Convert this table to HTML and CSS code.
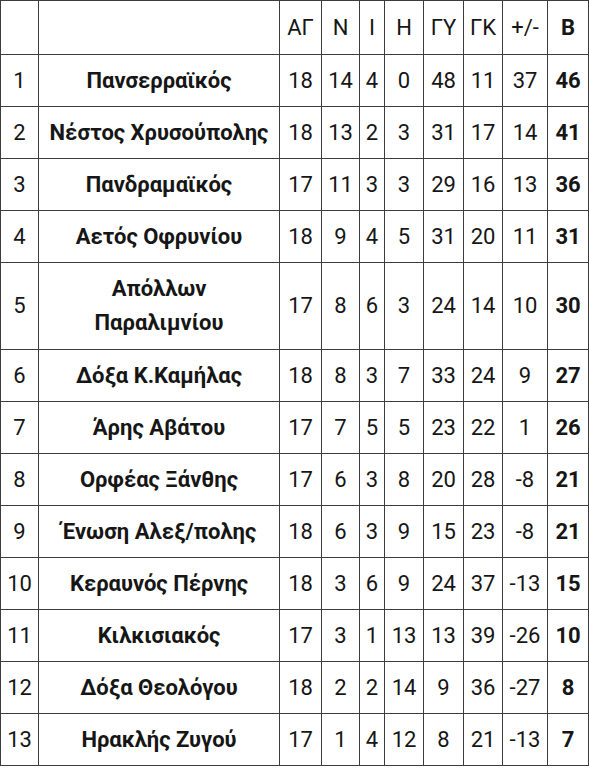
FILE: index.html
```html
<!DOCTYPE html>
<html lang="el">
<head>
<meta charset="utf-8">
<link rel="stylesheet" href="styles.css">
</head>
<body>
<table class="standings">
<colgroup>
<col class="c-pos"><col class="c-team"><col class="c-ag"><col class="c-n"><col class="c-i"><col class="c-h"><col class="c-gy"><col class="c-gk"><col class="c-diff"><col class="c-b">
</colgroup>
<thead>
<tr class="head"><th></th><th></th><th>ΑΓ</th><th>Ν</th><th>Ι</th><th>Η</th><th>ΓΥ</th><th>ΓΚ</th><th>+/-</th><th class="pts">Β</th></tr>
</thead>
<tbody>
<tr><td>1</td><td class="team">Πανσερραϊκός</td><td>18</td><td>14</td><td>4</td><td>0</td><td>48</td><td>11</td><td>37</td><td class="pts">46</td></tr>
<tr><td>2</td><td class="team">Νέστος Χρυσούπολης</td><td>18</td><td>13</td><td>2</td><td>3</td><td>31</td><td>17</td><td>14</td><td class="pts">41</td></tr>
<tr><td>3</td><td class="team">Πανδραμαϊκός</td><td>17</td><td>11</td><td>3</td><td>3</td><td>29</td><td>16</td><td>13</td><td class="pts">36</td></tr>
<tr><td>4</td><td class="team">Αετός Οφρυνίου</td><td>18</td><td>9</td><td>4</td><td>5</td><td>31</td><td>20</td><td>11</td><td class="pts">31</td></tr>
<tr class="tall"><td>5</td><td class="team">Απόλλων<br>Παραλιμνίου</td><td>17</td><td>8</td><td>6</td><td>3</td><td>24</td><td>14</td><td>10</td><td class="pts">30</td></tr>
<tr><td>6</td><td class="team">Δόξα Κ.Καμήλας</td><td>18</td><td>8</td><td>3</td><td>7</td><td>33</td><td>24</td><td>9</td><td class="pts">27</td></tr>
<tr><td>7</td><td class="team">Άρης Αβάτου</td><td>17</td><td>7</td><td>5</td><td>5</td><td>23</td><td>22</td><td>1</td><td class="pts">26</td></tr>
<tr><td>8</td><td class="team">Ορφέας Ξάνθης</td><td>17</td><td>6</td><td>3</td><td>8</td><td>20</td><td>28</td><td>-8</td><td class="pts">21</td></tr>
<tr><td>9</td><td class="team">Ένωση Αλεξ/πολης</td><td>18</td><td>6</td><td>3</td><td>9</td><td>15</td><td>23</td><td>-8</td><td class="pts">21</td></tr>
<tr><td>10</td><td class="team">Κεραυνός Πέρνης</td><td>18</td><td>3</td><td>6</td><td>9</td><td>24</td><td>37</td><td>-13</td><td class="pts">15</td></tr>
<tr><td>11</td><td class="team">Κιλκισιακός</td><td>17</td><td>3</td><td>1</td><td>13</td><td>13</td><td>39</td><td>-26</td><td class="pts">10</td></tr>
<tr><td>12</td><td class="team">Δόξα Θεολόγου</td><td>18</td><td>2</td><td>2</td><td>14</td><td>9</td><td>36</td><td>-27</td><td class="pts">8</td></tr>
<tr><td>13</td><td class="team">Ηρακλής Ζυγού</td><td>17</td><td>1</td><td>4</td><td>12</td><td>8</td><td>21</td><td>-13</td><td class="pts">7</td></tr>
</tbody>
</table>
</body>
</html>
```
FILE: styles.css
```css
html, body {
  margin: 0;
  padding: 0;
  background: #ffffff;
}
.standings {
  border-collapse: collapse;
  table-layout: fixed;
  width: 588px;
  font-family: Roboto, "Noto Sans", sans-serif;
  font-size: 22px;
  color: #161616;
}
.c-pos { width: 38px; }
.c-team { width: 241px; }
.c-ag { width: 42px; }
.c-n { width: 38px; }
.c-i { width: 25px; }
.c-h { width: 39px; }
.c-gy { width: 40px; }
.c-gk { width: 39px; }
.c-diff { width: 45px; }
.c-b { width: 41px; }
.standings th,
.standings td {
  border: 1px solid #3c3c3c;
  padding: 0;
  text-align: center;
  vertical-align: middle;
  font-weight: 400;
  line-height: 34px;
  white-space: nowrap;
}
.standings tr { height: 52px; }
.standings tr.head { height: 54px; }
.standings tr.tall { height: 87px; }
.standings .team,
.standings .pts {
  font-weight: 700;
}
```
